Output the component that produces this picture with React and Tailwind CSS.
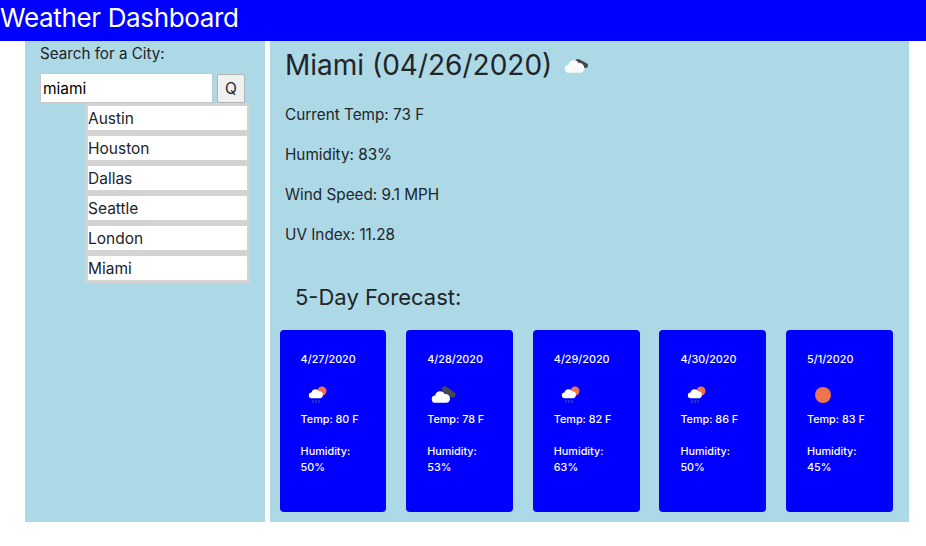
const cities = ['Austin', 'Houston', 'Dallas', 'Seattle', 'London', 'Miami'];

const forecast = [
  { date: '4/27/2020', icon: 'rain', temp: 80, humidity: 50 },
  { date: '4/28/2020', icon: 'dark', temp: 78, humidity: 53 },
  { date: '4/29/2020', icon: 'rain', temp: 82, humidity: 63 },
  { date: '4/30/2020', icon: 'rain', temp: 86, humidity: 50 },
  { date: '5/1/2020', icon: 'sun', temp: 83, humidity: 45 },
];

const CLOUD = 'M6 17.5a3.5 3.5 0 0 1-.4-7 5 5 0 0 1 9.4-1.6 4.3 4.3 0 0 1 5 4.3 4.3 4.3 0 0 1-3 4.3z';

function ForecastIcon({ type }) {
  return (
    <svg viewBox="0 0 40 24" className="w-10 h-6">
      {type === 'sun' && <circle cx="16" cy="12" r="8" fill="#ef7350" />}
      {type === 'dark' && (
        <>
          <path d="M18 6.5l7.5 5" stroke="#47474f" strokeWidth="6" strokeLinecap="round" />
          <path d={CLOUD} fill="#fff" transform="translate(2.4 1.8) scale(1.03)" />
        </>
      )}
      {type === 'rain' && (
        <>
          <circle cx="21" cy="8" r="4.5" fill="#ef7350" />
          <path d={CLOUD} fill="#fff" transform="translate(6 1.2) scale(0.8)" />
          <path d="M12 17v3M15 17v3M18 17v3" stroke="#5a6a9a" strokeWidth="0.8" />
        </>
      )}
    </svg>
  );
}

export default function App() {
  return (
    <div className="min-h-[546px] bg-white text-[#212529] font-['Inter','Liberation_Sans',sans-serif]">
      <header className="h-[41px] bg-[#0000ff] text-white text-[26px] tracking-[-0.35px] leading-[36px]">Weather Dashboard</header>

      <div className="flex pl-[25px] pr-[17px] gap-[5px]">
        <aside className="w-[240px] h-[481px] bg-[#add8e6] pl-[15px] pt-[3px]">
          <p className="text-[15.2px] leading-[19px]">Search for a City:</p>
          <div className="flex mt-[10px]">
            <input
              readOnly
              value="miami"
              className="w-[173px] h-[30px] bg-white border border-[#c8c8c8] pl-[2px] text-[15.5px] text-black outline-none"
            />
            <button className="ml-1 w-[28px] h-[29px] mt-[1px] border border-[#b4b4b4] rounded-[2px] bg-[#f0f0f0] text-[15.5px]">Q</button>
          </div>
          <ul className="ml-[45px] w-[165px] bg-[#d3d3d3] p-[3px] flex flex-col gap-[6px]">
            {cities.map((city) => (
              <li key={city} className="h-[24px] bg-white text-[15.5px] leading-[26px]">{city}</li>
            ))}
          </ul>
        </aside>

        <main className="flex-1 h-[481px] bg-[#add8e6] pl-[15px]">
          <div className="flex items-center pt-[6px]">
            <h1 className="text-[28px] leading-[36px]">Miami (04/26/2020)</h1>
            <svg viewBox="0 0 26 20" className="w-[26px] h-5 ml-3 mt-[4px]">
              <path d="M14 4.5l7.5 4" stroke="#47474f" strokeWidth="5" strokeLinecap="round" />
              <path d={CLOUD} fill="#fbfbfb" transform="translate(-1.75 -3.6) scale(1.1)" />
            </svg>
          </div>
          <p className="mt-5 text-[15.3px] leading-[24px]">Current Temp: 73 F</p>
          <p className="mt-4 text-[15.3px] leading-[24px]">Humidity: 83%</p>
          <p className="mt-4 text-[15.3px] leading-[24px]">Wind Speed: 9.1 MPH</p>
          <p className="mt-4 text-[15.3px] leading-[24px]">UV Index: 11.28</p>
          <h2 className="mt-[35px] ml-[10px] text-[22px] leading-[30px]">5-Day Forecast:</h2>
          <div className="mt-[18px] ml-[-5.4px] w-[613.2px] flex justify-between">
            {forecast.map((day) => (
              <div key={day.date} className="w-[106.8px] h-[182px] bg-[#0000ff] rounded-[4px] text-white text-[10.8px] font-medium leading-[16px] pl-[21px] pt-[22px]">
                <p>{day.date}</p>
                <div className="h-[29px] mt-[15px]"><ForecastIcon type={day.icon} /></div>
                <p>Temp: {day.temp} F</p>
                <p className="mt-4">Humidity:</p>
                <p>{day.humidity}%</p>
              </div>
            ))}
          </div>
        </main>
      </div>
    </div>
  );
}
